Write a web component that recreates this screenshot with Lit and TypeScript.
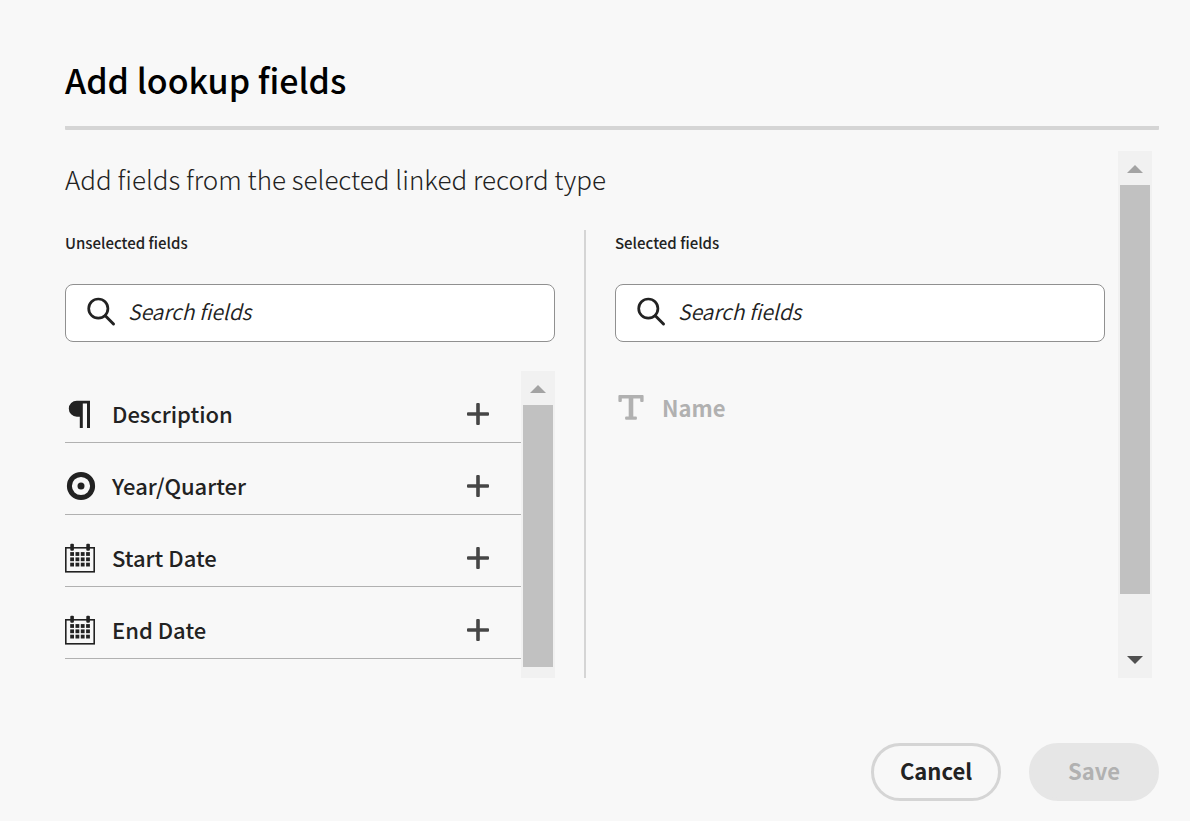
import { LitElement, html, css, svg, nothing } from "lit";
import { customElement, property, state } from "lit/decorators.js";

type FieldType = "paragraph" | "select" | "date" | "text";
interface Field {
  name: string;
  type: FieldType;
}

const dateCells = [0, 1, 2].flatMap((row) =>
  [0, 1, 2, 3].map(
    (col) => svg`<rect x=${5.2 + col * 5.3} y=${9.1 + row * 5.3} width="3.8" height="3.8"></rect>`
  )
);

const icons: Record<FieldType, unknown> = {
  paragraph: svg`<path d="M11.8 1.7H25V29h-3V4.4h-4.2V29h-3V17.7h-3a8 8 0 0 1 0-16z"></path>`,
  select: svg`<circle cx="16" cy="15" r="11.6" fill="none" stroke="currentColor" stroke-width="5"></circle>
    <circle cx="16" cy="15" r="3.5"></circle>`,
  date: svg`<rect x="0.8" y="4.8" width="28.4" height="24" fill="none" stroke="currentColor" stroke-width="1.6"></rect>
    <rect x="5.3" y="0.8" width="3.6" height="7" rx="1"></rect>
    <rect x="21.3" y="0.8" width="3.6" height="7" rx="1"></rect>${dateCells}`,
  text: svg`<path d="M4.4 2h23.2a1 1 0 0 1 1 1v5a1 1 0 0 1-1 1h-1.4a1 1 0 0 1-1-1V5.4h-6.9v18.2h2.6a1 1 0 0 1 1 1v1.2a1 1 0 0 1-1 1h-9.8a1 1 0 0 1-1-1v-1.2a1 1 0 0 1 1-1h2.6V5.4H6.8V8a1 1 0 0 1-1 1H4.4a1 1 0 0 1-1-1V3a1 1 0 0 1 1-1z"></path>`,
};

@customElement("scroll-track")
class ScrollTrack extends LitElement {
  @property({ type: Number }) thumb = 1;
  @property({ type: Number }) rest = 0;
  @property({ type: Boolean }) down = false;

  static styles = css`
    :host {
      display: flex;
      flex-direction: column;
      width: 34px;
      background: #f1f1f1;
    }
    .arrow {
      display: flex;
      flex: none;
      align-items: center;
      justify-content: center;
      height: 34px;
      padding-top: 2px;
      box-sizing: border-box;
      color: #a3a3a3;
    }
    .enabled {
      padding-top: 0;
      padding-bottom: 2px;
      color: #505050;
    }
    .thumb {
      margin: 0 2px;
      background: #c1c1c1;
    }
  `;

  render() {
    return html`
      <div class="arrow"><svg width="16" height="8" fill="currentColor"><path d="M0 8 8 0l8 8z"></path></svg></div>
      <div class="thumb" style="flex: ${this.thumb} 0 0px"></div>
      <div style="flex: ${this.rest} 0 0px"></div>
      ${this.down
        ? html`<div class="arrow enabled"><svg width="16" height="8" fill="currentColor"><path d="M0 0h16L8 8z"></path></svg></div>`
        : nothing}
    `;
  }
}

@customElement("app-root")
class AppRoot extends LitElement {
  @state() private unselected: Field[] = [
    { name: "Description", type: "paragraph" },
    { name: "Year/Quarter", type: "select" },
    { name: "Start Date", type: "date" },
    { name: "End Date", type: "date" },
  ];
  @state() private selected: Field[] = [{ name: "Name", type: "text" }];

  static styles = css`
    :host {
      display: block;
      min-height: 100vh;
      box-sizing: border-box;
      padding: 54px 31px 20px 65px;
      background: #f8f8f8;
      color: #222;
      font-family: "Noto Sans CJK SC", "Noto Sans", sans-serif;
    }
    .title {
      margin: 0;
      padding-bottom: 20px;
      border-bottom: 4px solid #d5d5d5;
      border-radius: 1px;
      color: #000;
      font-size: 34px;
      line-height: 52px;
      font-weight: 500;
    }
    .body {
      display: flex;
      gap: 13px;
      padding: 21px 7px 0 0;
    }
    .content {
      flex: 1;
      min-width: 0;
    }
    .intro {
      margin: 0;
      padding: 8px 0 31px;
      font-size: 26px;
      line-height: 40px;
      font-weight: 300;
    }
    .columns {
      display: grid;
      grid-template-columns: 1fr 2px 1fr;
      gap: 29px;
    }
    .divider {
      background: #d5d5d5;
    }
    .heading {
      display: block;
      margin: 0 0 28px;
      font-size: 15px;
      line-height: 26px;
      font-weight: 500;
    }
    .search {
      display: flex;
      align-items: center;
      gap: 11px;
      height: 58px;
      box-sizing: border-box;
      padding: 0 20px 2px;
      border: 1px solid #909090;
      border-radius: 8px;
      background: #fff;
    }
    .search svg {
      flex: none;
    }
    .input {
      flex: 1;
      min-width: 0;
      height: 40px;
      padding: 0 0 2px;
      box-sizing: border-box;
      border: 0;
      outline: 0;
      background: none;
      color: #222;
      font: italic 350 21px "Noto Sans CJK SC", "Noto Sans", sans-serif;
    }
    .input::placeholder {
      color: #222;
      opacity: 1;
    }
    .panel {
      display: flex;
      height: 307px;
      margin-top: 29px;
      overflow: hidden;
    }
    .panel scroll-track {
      flex: none;
    }
    .list {
      flex: 1;
      min-width: 0;
      margin: 0;
      padding: 0;
      list-style: none;
    }
    .row {
      display: flex;
      align-items: center;
      gap: 15px;
      height: 72px;
      box-sizing: border-box;
      padding: 14px 27px 0 0;
      border-bottom: 1px solid #b1b1b1;
      font-size: 22px;
      line-height: 36px;
      font-weight: 500;
    }
    .fixed {
      padding-top: 2px;
      border-bottom-color: transparent;
      color: #b1b1b1;
      font-weight: 700;
    }
    .icon {
      flex: none;
    }
    .name {
      flex: 1;
      padding-bottom: 2px;
    }
    .add {
      display: flex;
      padding: 4px;
      border: 0;
      background: none;
      color: #464646;
      cursor: pointer;
    }
    .footer {
      display: flex;
      justify-content: flex-end;
      gap: 28px;
      padding-top: 65px;
    }
    .button {
      min-width: 130px;
      height: 58px;
      padding: 0 24px 4px;
      border: 3px solid #d5d5d5;
      border-radius: 29px;
      background: transparent;
      color: #222;
      font: 700 22px "Noto Sans CJK SC", "Noto Sans", sans-serif;
    }
    .button:disabled {
      border-color: #e6e6e6;
      background: #e6e6e6;
      color: #b1b1b1;
    }
  `;

  private add(field: Field) {
    this.unselected = this.unselected.filter((f) => f !== field);
    this.selected = [...this.selected, field];
  }

  private icon(type: FieldType) {
    return html`<svg class="icon" width="32" height="30" viewBox="0 0 32 30" fill="currentColor" aria-hidden="true">${icons[type]}</svg>`;
  }

  private search(id: string, label: string) {
    return html`
      <label class="heading" for=${id}>${label}</label>
      <div class="search">
        <svg width="31" height="30" viewBox="0 0 31 30" fill="none" stroke="#222" aria-hidden="true">
          <circle cx="12.3" cy="11.6" r="9.6" stroke-width="2.7"></circle>
          <path d="m19.3 18.8 8.2 8.2" stroke-width="3" stroke-linecap="round"></path>
        </svg>
        <input class="input" id=${id} type="text" placeholder="Search fields" />
      </div>
    `;
  }

  render() {
    return html`
      <h1 class="title">Add lookup fields</h1>
      <div class="body">
        <div class="content">
          <p class="intro">Add fields from the selected linked record type</p>
          <div class="columns">
            <section>
              ${this.search("unselected", "Unselected fields")}
              <div class="panel">
                <ul class="list">
                  ${this.unselected.map(
                    (f) => html`<li class="row">
                      ${this.icon(f.type)}<span class="name">${f.name}</span>
                      <button class="add" aria-label="Add ${f.name}" @click=${() => this.add(f)}>
                        <svg width="24" height="24" fill="currentColor"><path d="M10.2 2a1 1 0 0 1 1-1h1.6a1 1 0 0 1 1 1v8.2H22a1 1 0 0 1 1 1v1.6a1 1 0 0 1-1 1h-8.2V22a1 1 0 0 1-1 1h-1.6a1 1 0 0 1-1-1v-8.2H2a1 1 0 0 1-1-1v-1.6a1 1 0 0 1 1-1h8.2z"></path></svg>
                      </button>
                    </li>`
                  )}
                </ul>
                <scroll-track .thumb=${262} .rest=${11}></scroll-track>
              </div>
            </section>
            <div class="divider"></div>
            <section>
              ${this.search("selected", "Selected fields")}
              <div class="panel">
                <ul class="list">
                  ${this.selected.map(
                    (f) => html`<li class="row fixed">${this.icon(f.type)}<span class="name">${f.name}</span></li>`
                  )}
                </ul>
              </div>
            </section>
          </div>
        </div>
        <scroll-track .thumb=${409} .rest=${50} .down=${true}></scroll-track>
      </div>
      <div class="footer">
        <button class="button">Cancel</button>
        <button class="button" disabled>Save</button>
      </div>
    `;
  }
}
